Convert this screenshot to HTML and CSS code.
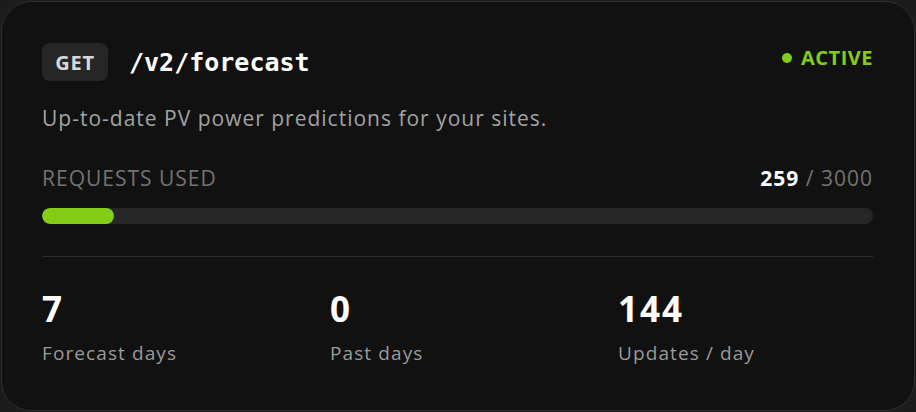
FILE: index.html
```html
<!DOCTYPE html>
<html>
<head>
<meta charset="utf-8">
<link rel="stylesheet" href="styles.css">
</head>
<body>
<div class="card">
  <div class="head">
    <div class="left">
      <span class="method">GET</span>
      <span class="path">/v2/forecast</span>
    </div>
    <div class="status"><span class="dot"></span>ACTIVE</div>
  </div>
  <p class="desc">Up-to-date PV power predictions for your sites.</p>
  <div class="usage">
    <span class="label">REQUESTS USED</span>
    <span class="count"><b>259</b> / 3000</span>
  </div>
  <div class="track"><div class="fill" style="width:8.63%"></div></div>
  <div class="divider"></div>
  <div class="stats">
    <div class="stat"><div class="num">7</div><div class="cap">Forecast days</div></div>
    <div class="stat"><div class="num">0</div><div class="cap">Past days</div></div>
    <div class="stat"><div class="num">144</div><div class="cap">Updates / day</div></div>
  </div>
</div>
</body>
</html>
```

FILE: styles.css
```css
* { box-sizing: border-box; }
html, body { margin: 0; padding: 0; }
body {
  background: #1c1c1c;
  width: 916px;
  height: 412px;
  padding: 1px;
  font-family: "Open Sans", "Noto Sans", sans-serif;
}
.card {
  width: 914px;
  height: 410px;
  background: #111111;
  border: 1px solid #2e2e2e;
  border-radius: 30px;
  padding: 41px 41px 0 40px;
}
.head {
  display: flex;
  justify-content: space-between;
  align-items: flex-start;
  height: 38px;
}
.left { display: flex; align-items: center; gap: 21px; }
.method {
  display: inline-flex;
  align-items: center;
  justify-content: center;
  width: 66px;
  height: 38px;
  background: #262626;
  border-radius: 8px;
  color: #d8d8d8;
  font-weight: 700;
  font-size: 20px;
  letter-spacing: 0.8px;
}
.path {
  font-family: "DejaVu Sans Mono", monospace;
  font-weight: 700;
  font-size: 25px;
  color: #ffffff;
}
.status {
  display: flex;
  align-items: center;
  gap: 9px;
  color: #84cc16;
  font-weight: 700;
  font-size: 20px;
  line-height: 24px;
  letter-spacing: 0.5px;
  margin-top: 3px;
}
.dot {
  width: 10px;
  height: 10px;
  border-radius: 50%;
  background: #84cc16;
}
.desc {
  margin: 23px 0 0 0;
  color: #a3a3a3;
  font-size: 21px;
  line-height: 28px;
  letter-spacing: 1px;
}
.usage {
  display: flex;
  justify-content: space-between;
  align-items: baseline;
  margin-top: 33px;
  line-height: 26px;
  font-size: 21px;
  letter-spacing: 1px;
  color: #737373;
}
.count b { color: #ffffff; font-weight: 700; }
.track {
  margin-top: 17px;
  height: 16px;
  border-radius: 8px;
  background: #262626;
  overflow: hidden;
}
.fill { height: 100%; background: #84cc16; border-radius: 8px; }
.divider {
  margin-top: 32px;
  height: 1px;
  background: #2e2e2e;
}
.stats {
  display: grid;
  grid-template-columns: 1fr 1fr 1fr;
  column-gap: 33px;
  margin-top: 32px;
}
.num {
  color: #ffffff;
  font-weight: 700;
  font-size: 35px;
  line-height: 40px;
  letter-spacing: 2px;
}
.cap {
  margin-top: 11px;
  color: #9a9a9a;
  font-size: 19px;
  line-height: 26px;
  letter-spacing: 1.1px;
}
```
